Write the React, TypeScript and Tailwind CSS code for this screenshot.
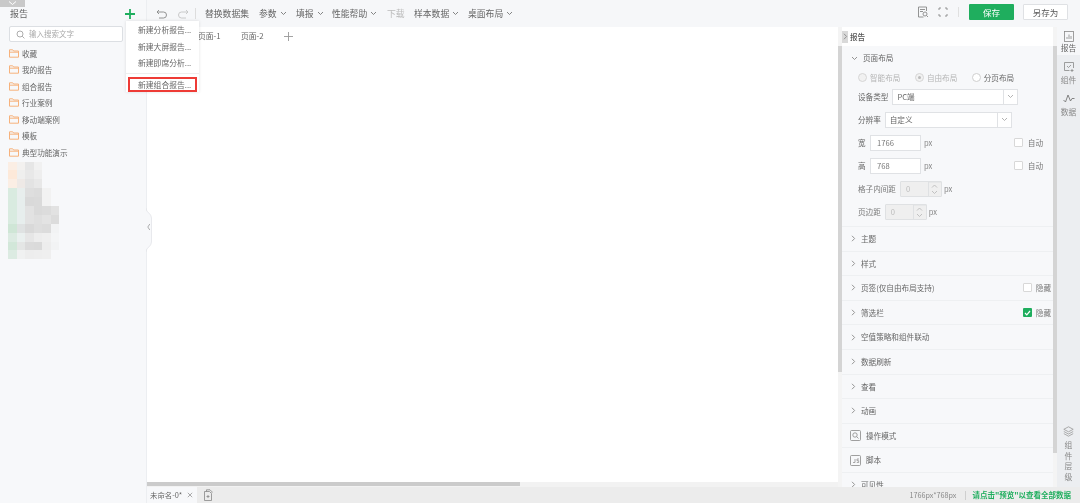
import React from "react";

const cjk = { fontFamily: '"Noto Sans CJK SC","Noto Sans",sans-serif' };

const Caret = ({ c = "#777" }: { c?: string }) => (
  <svg width="7" height="5" viewBox="0 0 7 5" fill="none" stroke={c} strokeWidth="0.9"><path d="M1 1l2.5 2.5L6 1" /></svg>
);
const Right = () => (
  <svg width="5" height="7" viewBox="0 0 5 7" fill="none" stroke="#8a8a8a" strokeWidth="0.9"><path d="M1 .8l2.6 2.7L1 6.2" /></svg>
);
const Folder = () => (
  <svg width="10" height="9" viewBox="0 0 10 9" fill="none" stroke="#f6b27c" strokeWidth="1"><path d="M.5 8.2V.8h3.2l.9 1.2h4.9v6.2z" /><path d="M.5 3.2h9" /></svg>
);

const mosaic = [
  ["#fbeee4", "#f3f1ef", "#e6e6e6", "#f1f1f1", "", ""],
  ["#fde9d9", "#efefee", "#e8e8e8", "#eeeeee", "", ""],
  ["#fbeee4", "#eee9e6", "#e3e3e3", "#e8e8e8", "", ""],
  ["#d9ebe0", "#e8eeed", "#dedede", "#dcdcdc", "#f2f2f2", ""],
  ["#d9ebe0", "#e7eeed", "#d9d9d9", "#dadada", "#f2f2f2", ""],
  ["#d9ebe0", "#e7eeed", "#e2e2e2", "#dadada", "#dcdcdc", "#e2e2e2"],
  ["#d9ebe0", "#e7eeed", "#e2e2e2", "#dfdfdf", "#e3e3e3", "#dcdcdc"],
  ["#cfe6d6", "#dfe2e2", "#d9d9d9", "#dedede", "#dcdcdc", "#f2f3f4"],
  ["#dcebe2", "#eaf0ef", "#e6e6e6", "#ededed", "#efefef", "#f4f5f6"],
  ["#d2e7d9", "#e4e6e5", "#dbdbdb", "#dadada", "#ededed", "#f2f3f4"],
  ["#dcebe2", "#f0f1f1", "#ededed", "#eeeeee", "#efefef", ""],
];

const Sidebar = () => (
  <aside className="relative z-10 w-[147px] h-[503px] shrink-0 bg-[#f7f8fa] border-r border-[#eceef1] flex flex-col">
    <div className="absolute left-0 top-0 w-[25px] h-[7px] bg-[#c9c9c9] flex items-center justify-center">
      <svg width="9" height="5" viewBox="0 0 9 5" fill="none" stroke="#fff" strokeWidth="1"><path d="M1 .5l3.5 3 3.5-3" /></svg>
    </div>
    <div className="h-[26px] pl-[10px] pr-[10px] pt-[6px] flex justify-between items-start">
      <span className="text-[9px] leading-[15px] text-[#666]">报告</span>
      <svg width="12" height="12" viewBox="0 0 12 12" className="mt-[2px]" stroke="#1fae5e" strokeWidth="1.8"><path d="M6 1v10M1 6h10" /></svg>
    </div>
    <div className="ml-[9px] w-[114px] h-[16px] bg-white border border-[#dcdfe3] rounded-[2px] flex items-center pl-[6px] gap-[4px]">
      <svg width="9" height="9" viewBox="0 0 9 9" fill="none" stroke="#999" strokeWidth="0.8"><circle cx="4" cy="4" r="3" /><path d="M6.2 6.2L8.4 8.4" /></svg>
      <span className="text-[7.5px] text-[#aaa]">输入搜索文字</span>
    </div>
    <ul className="mt-[3px] pl-[9px] flex flex-col">
      {["收藏", "我的报告", "组合报告", "行业案例", "移动端案例", "模板", "典型功能演示"].map((t) => (
        <li key={t} className="h-[16.5px] flex items-center gap-[3px]">
          <Folder />
          <span className="text-[7.6px] text-[#666]">{t}</span>
        </li>
      ))}
    </ul>
    <div className="ml-[8px] mt-[1px] w-[51px] grid grid-cols-6 grid-rows-[repeat(11,8.9px)]">
      {mosaic.flat().map((c, i) => (
        <div key={i} style={{ background: c || "transparent" }} />
      ))}
    </div>
    <svg className="absolute left-[146px] top-[208px]" width="7" height="44" viewBox="0 0 7 44" fill="#f7f8fa" stroke="#e3e5e8" strokeWidth="0.8">
      <path d="M0 0c0 5 5.5 5 5.5 10v24c0 5-5.5 5-5.5 10" />
      <path d="M3.8 16L1.8 19l2 3" fill="none" stroke="#999" />
    </svg>
    <div className="absolute left-[126px] top-[21px] w-[73px] h-[71px] bg-white shadow-[0_0_3px_rgba(0,0,0,0.12)] flex flex-col pt-[1px]">
      {["新建分析报告...", "新建大屏报告...", "新建即席分析..."].map((t) => (
        <div key={t} className="h-[16.7px] pl-[12px] flex items-center text-[7.8px] text-[#666] whitespace-nowrap">{t}</div>
      ))}
      <div className="mt-[2px] border-t border-[#eee] pt-[3px] px-[2px]">
        <div className="h-[15px] border-2 border-[#ee3b36] pl-[8px] flex items-center text-[7.8px] text-[#666] whitespace-nowrap">新建组合报告...</div>
      </div>
    </div>
  </aside>
);

const TopItem = ({ t, caret = true, gray = false, w }: { t: string; caret?: boolean; gray?: boolean; w: string }) => (
  <div className={`flex items-center gap-[3px] ${w}`}>
    <span className={`text-[8.8px] whitespace-nowrap ${gray ? "text-[#bbb]" : "text-[#666]"}`}>{t}</span>
    {caret && <Caret />}
  </div>
);

const TopBar = () => (
  <header className="h-[27px] shrink-0 bg-[#f6f7f9] flex items-center">
    <div className="w-[9px] shrink-0" />
    <div className="flex items-center gap-[9px]">
      <svg width="12" height="10" viewBox="0 0 12 10" fill="none" stroke="#888" strokeWidth="0.9"><path d="M3 1L1 3l2 2M1 3h6.5a2.5 2.5 0 010 6H3" /></svg>
      <svg width="12" height="10" viewBox="0 0 12 10" fill="none" stroke="#c4c4c4" strokeWidth="0.9"><path d="M9 1l2 2-2 2M11 3H4.5a2.5 2.5 0 000 6H9" /></svg>
    </div>
    <div className="w-px h-[11px] bg-[#ddd] ml-[6px] mr-[9px]" />
    <TopItem t="替换数据集" caret={false} w="w-[54px]" />
    <TopItem t="参数" w="w-[37px]" />
    <TopItem t="填报" w="w-[36px]" />
    <TopItem t="性能帮助" w="w-[55px]" />
    <TopItem t="下载" caret={false} gray w="w-[27px]" />
    <TopItem t="样本数据" w="w-[54px]" />
    <TopItem t="桌面布局" w="w-[50px]" />
    <div className="ml-auto flex items-center pr-[12px] pb-[3px]">
      <svg width="12" height="12" viewBox="0 0 12 12" fill="none" stroke="#888" strokeWidth="0.9" className="mr-[9px]"><path d="M9.5 5V1h-8v10h5M3 3.5h5M3 5.5h3" /><circle cx="8" cy="8" r="2" /><path d="M9.5 9.5L11 11" /></svg>
      <svg width="10" height="10" viewBox="0 0 10 10" fill="none" stroke="#888" strokeWidth="0.9" className="mr-[10px]"><path d="M1 3V1h2M7 1h2v2M9 7v2H7M3 9H1V7" /></svg>
      <div className="w-px h-[10px] bg-[#e0e0e0] mr-[10px]" />
      <button className="w-[45px] h-[16px] bg-[#1fae5e] rounded-[1px] text-white text-[8.5px] mr-[9px]">保存</button>
      <button className="w-[45px] h-[16px] bg-white border border-[#dfe1e4] rounded-[1px] text-[#555] text-[8.5px]">另存为</button>
    </div>
  </header>
);

const Canvas = () => (
  <main className="flex-1 bg-white flex flex-col min-w-0">
    <div className="h-[18px] flex items-center pl-[51px] text-[7.8px] text-[#666]">
      <span className="w-[43px]">页面-1</span>
      <span className="w-[43px]">页面-2</span>
      <svg width="9" height="9" viewBox="0 0 9 9" stroke="#999" strokeWidth="0.9"><path d="M4.5 0v9M0 4.5h9" /></svg>
    </div>
    <div className="mt-auto h-[5px] bg-[#f2f2f2]">
      <div className="w-[373px] h-[4px] bg-[#cbcbcb]" />
    </div>
  </main>
);

const Radio = ({ t, checked, dim }: { t: string; checked?: boolean; dim?: boolean }) => (
  <div className="flex items-center gap-[3px]">
    <span className={`w-[9px] h-[9px] rounded-full border flex items-center justify-center ${dim ? "border-[#d6d6d6] bg-[#f1f1f1]" : "border-[#cfcfcf] bg-white"}`}>
      {checked && <span className="w-[3px] h-[3px] rounded-full bg-[#bbb]" />}
    </span>
    <span className={`text-[7.6px] ${dim ? "text-[#b5b5b5]" : "text-[#666]"}`}>{t}</span>
  </div>
);

const Select = ({ v, w }: { v: string; w: string }) => (
  <div className={`${w} h-[16px] bg-white border border-[#e0e2e5] flex items-center`}>
    <span className="flex-1 pl-[4px] text-[7.6px] text-[#666]">{v}</span>
    <span className="w-[14px] h-full border-l border-[#e0e2e5] flex items-center justify-center"><Caret c="#aaa" /></span>
  </div>
);

const Check = ({ on }: { on?: boolean }) =>
  on ? (
    <span className="w-[9px] h-[9px] rounded-[1px] bg-[#1fae5e] flex items-center justify-center">
      <svg width="7" height="6" viewBox="0 0 7 6" fill="none" stroke="#fff" strokeWidth="1.2"><path d="M1 3l1.8 1.8L6 1" /></svg>
    </span>
  ) : (
    <span className="w-[9px] h-[9px] rounded-[1px] bg-white border border-[#d8d8d8]" />
  );

const NumInput = ({ v, label }: { v: string; label: string }) => (
  <div className="flex items-center h-[23px] shrink-0 pl-[16px]">
    <span className="text-[7.6px] text-[#777] mr-[4px] whitespace-nowrap">{label}</span>
    <div className="w-[42px] h-[16px] border border-[#dfe1e3] bg-[#efefef] flex items-center rounded-[1px]">
      <span className="flex-1 pl-[5px] text-[7.6px] text-[#bbb]">{v}</span>
      <span className="w-[13px] h-full border-l border-[#dfe1e3] flex flex-col">
        <span className="flex-1 border-b border-[#dfe1e3] flex items-center justify-center rotate-180"><Caret c="#bbb" /></span>
        <span className="flex-1 flex items-center justify-center"><Caret c="#bbb" /></span>
      </span>
    </div>
    <span className="ml-[2px] text-[7.6px] text-[#888]">px</span>
  </div>
);

const SizeRow = ({ label, v }: { label: string; v: string }) => (
  <div className="flex items-center h-[23px] shrink-0 pl-[16px] pr-[10px]">
    <span className="w-[12px] text-[7.6px] text-[#666]">{label}</span>
    <div className="w-[51px] h-[16px] bg-white border border-[#e0e2e5] pl-[6px] flex items-center text-[7.6px] text-[#777]">{v}</div>
    <span className="ml-[3px] text-[7.6px] text-[#888]">px</span>
    <span className="ml-auto flex items-center gap-[5px]">
      <Check />
      <span className="text-[7.6px] text-[#777]">自动</span>
    </span>
  </div>
);

const Section = ({ t, check }: { t: string; check?: boolean | null }) => (
  <div className="h-[24.6px] shrink-0 border-t border-[#eef0f2] flex items-center pl-[9px] pr-[2px]">
    <Right />
    <span className="ml-[5px] text-[7.6px] text-[#666]">{t}</span>
    {check !== undefined && check !== null && (
      <span className="ml-auto flex items-center gap-[4px]">
        <Check on={check} />
        <span className="text-[7.6px] text-[#777]">隐藏</span>
      </span>
    )}
  </div>
);

const IconRow = ({ t, icon }: { t: string; icon: React.ReactNode }) => (
  <div className="h-[24.6px] shrink-0 border-t border-[#eef0f2] flex items-center pl-[8px]">
    {icon}
    <span className="ml-[5px] text-[7.6px] text-[#666]">{t}</span>
  </div>
);

const Panel = () => (
  <section className="w-[219px] shrink-0 bg-white flex h-full overflow-hidden">
    <div className="w-[4px] bg-[#f4f4f4] shrink-0 pt-[19px]">
      <div className="h-[326px] bg-[#d4d4d4]" />
    </div>
    <div className="flex-1 min-w-0 bg-[#f7f8fa] flex flex-col">
      <div className="h-[19px] shrink-0 flex items-center gap-[2px] bg-white">
        <span className="w-[6px] h-[12px] bg-[#d9d9d9] flex items-center justify-center"><Right /></span>
        <span className="text-[7.6px] text-[#555] font-medium">报告</span>
      </div>
      <div className="h-[20px] shrink-0 flex items-center pl-[9px] gap-[5px] mt-[2px]">
        <Caret c="#888" />
        <span className="text-[7.6px] text-[#666]">页面布局</span>
      </div>
      <div className="h-[15px] mt-[2px] shrink-0 pl-[16px] flex items-center gap-[14.5px]">
        <Radio t="智能布局" dim />
        <Radio t="自由布局" dim checked />
        <Radio t="分页布局" />
      </div>
      <div className="h-[23px] shrink-0 pl-[16px] flex items-center gap-[4px]">
        <span className="text-[7.6px] text-[#666]">设备类型</span>
        <Select v="PC端" w="w-[126px]" />
      </div>
      <div className="h-[23px] shrink-0 pl-[16px] flex items-center gap-[4px]">
        <span className="text-[7.6px] text-[#666]">分辨率</span>
        <Select v="自定义" w="w-[127px]" />
      </div>
      <SizeRow label="宽" v="1766" />
      <SizeRow label="高" v="768" />
      <NumInput label="格子内间距" v="0" />
      <NumInput label="页边距" v="0" />
      <div className="h-[3px] shrink-0" />
      <Section t="主题" />
      <Section t="样式" />
      <Section t="页签(仅自由布局支持)" check={false} />
      <Section t="筛选栏" check={true} />
      <Section t="空值策略和组件联动" />
      <Section t="数据刷新" />
      <Section t="查看" />
      <Section t="动画" />
      <IconRow
        t="操作模式"
        icon={
          <svg width="11" height="11" viewBox="0 0 11 11" fill="none" stroke="#888" strokeWidth="0.8"><rect x=".5" y=".5" width="10" height="10" rx="1" /><circle cx="5" cy="5" r="2.2" /><path d="M6.6 6.6L8.5 8.5" /></svg>
        }
      />
      <IconRow
        t="脚本"
        icon={
          <svg width="11" height="11" viewBox="0 0 11 11" fill="none" stroke="#888" strokeWidth="0.8"><rect x=".5" y=".5" width="10" height="10" rx="1" /><path d="M5 4v3.5H3M9 4H7v1.7h1.7v1.8H6.8" strokeWidth="0.7" /></svg>
        }
      />
      <Section t="可见性" />
    </div>
    <div className="w-[4px] bg-[#f4f4f4] shrink-0 pt-[19px]">
      <div className="h-[407px] bg-[#d4d4d4]" />
    </div>
  </section>
);

const Rail = () => (
  <nav className="w-[23px] shrink-0 bg-[#eceef1] flex flex-col items-center h-full text-[7.8px] text-[#888]">
    <div className="w-full bg-[#f6f7f9] h-[28px] flex flex-col items-center">
      <svg width="10" height="11" viewBox="0 0 10 11" fill="none" stroke="#888" strokeWidth="0.8" className="mt-[4px]"><rect x=".5" y=".5" width="9" height="10" /><path d="M3 8V6M5 8V3.5M7 8V5" /></svg>
      <span className="text-[#666] leading-[11px]">报告</span>
    </div>
    <svg width="10" height="10" viewBox="0 0 10 10" fill="none" stroke="#888" strokeWidth="0.8" className="mt-[7px]"><path d="M9.5 6V.5H.5v8h5" /><path d="M3 4l1.5 1.5L7 3M6.5 8.5h3M8 7v3" /></svg>
    <span className="leading-[11px] mt-[2px]">组件</span>
    <svg width="12" height="9" viewBox="0 0 12 9" fill="none" stroke="#777" strokeWidth="0.9" className="mt-[9px]"><path d="M.5 6l2 2L5 1l2.5 6L9 4.5h2.5" /></svg>
    <span className="leading-[11px] mt-[3px]">数据</span>
    <svg width="11" height="11" viewBox="0 0 11 11" fill="none" stroke="#999" strokeWidth="0.8" className="mt-auto"><path d="M5.5 .8L10.2 3.3 5.5 5.8 .8 3.3zM.8 5.5l4.7 2.5 4.7-2.5M.8 7.6l4.7 2.6 4.7-2.6" /></svg>
    <div className="mt-[3px] mb-[5px] flex flex-col items-center leading-[10.5px]">
      <span>组</span><span>件</span><span>层</span><span>级</span>
    </div>
  </nav>
);

const StatusBar = () => (
  <footer className="h-[16px] shrink-0 bg-[#ececec] flex items-center">
    <div className="w-[50px] h-full bg-[#f7f8fa] flex items-center pl-[3px] gap-[5px]">
      <span className="text-[7.4px] text-[#666] whitespace-nowrap">未命名-0*</span>
      <svg width="6" height="6" viewBox="0 0 6 6" stroke="#888" strokeWidth="0.7" className="shrink-0"><path d="M.8.8l4.4 4.4M5.2.8L.8 5.2" /></svg>
    </div>
    <svg width="10" height="12" viewBox="0 0 10 12" fill="none" stroke="#888" strokeWidth="0.8" className="ml-[6px]"><path d="M1.5 2.5h5l2 2v7h-7zM3.5 2.5V.8h3.5l2 2v1" /><path d="M3.5 7.5h3M5 6v3" /></svg>
    <span className="ml-auto text-[7.2px] text-[#888]">1766px*768px</span>
    <span className="w-px h-[9px] bg-[#cfcfcf] ml-[9px] mr-[6px]" />
    <span className="text-[7.5px] font-bold text-[#1fae5e] pr-[9px] whitespace-nowrap">请点击"预览"以查看全部数据</span>
  </footer>
);

export default function App() {
  return (
    <div style={cjk} className="relative w-[1080px] h-[503px] overflow-hidden flex bg-white blur-[0.35px]">
      <Sidebar />
      <div className="flex-1 min-w-0 flex flex-col">
        <TopBar />
        <div className="flex-1 min-h-0 flex">
          <Canvas />
          <Panel />
          <Rail />
        </div>
        <StatusBar />
      </div>
    </div>
  );
}
